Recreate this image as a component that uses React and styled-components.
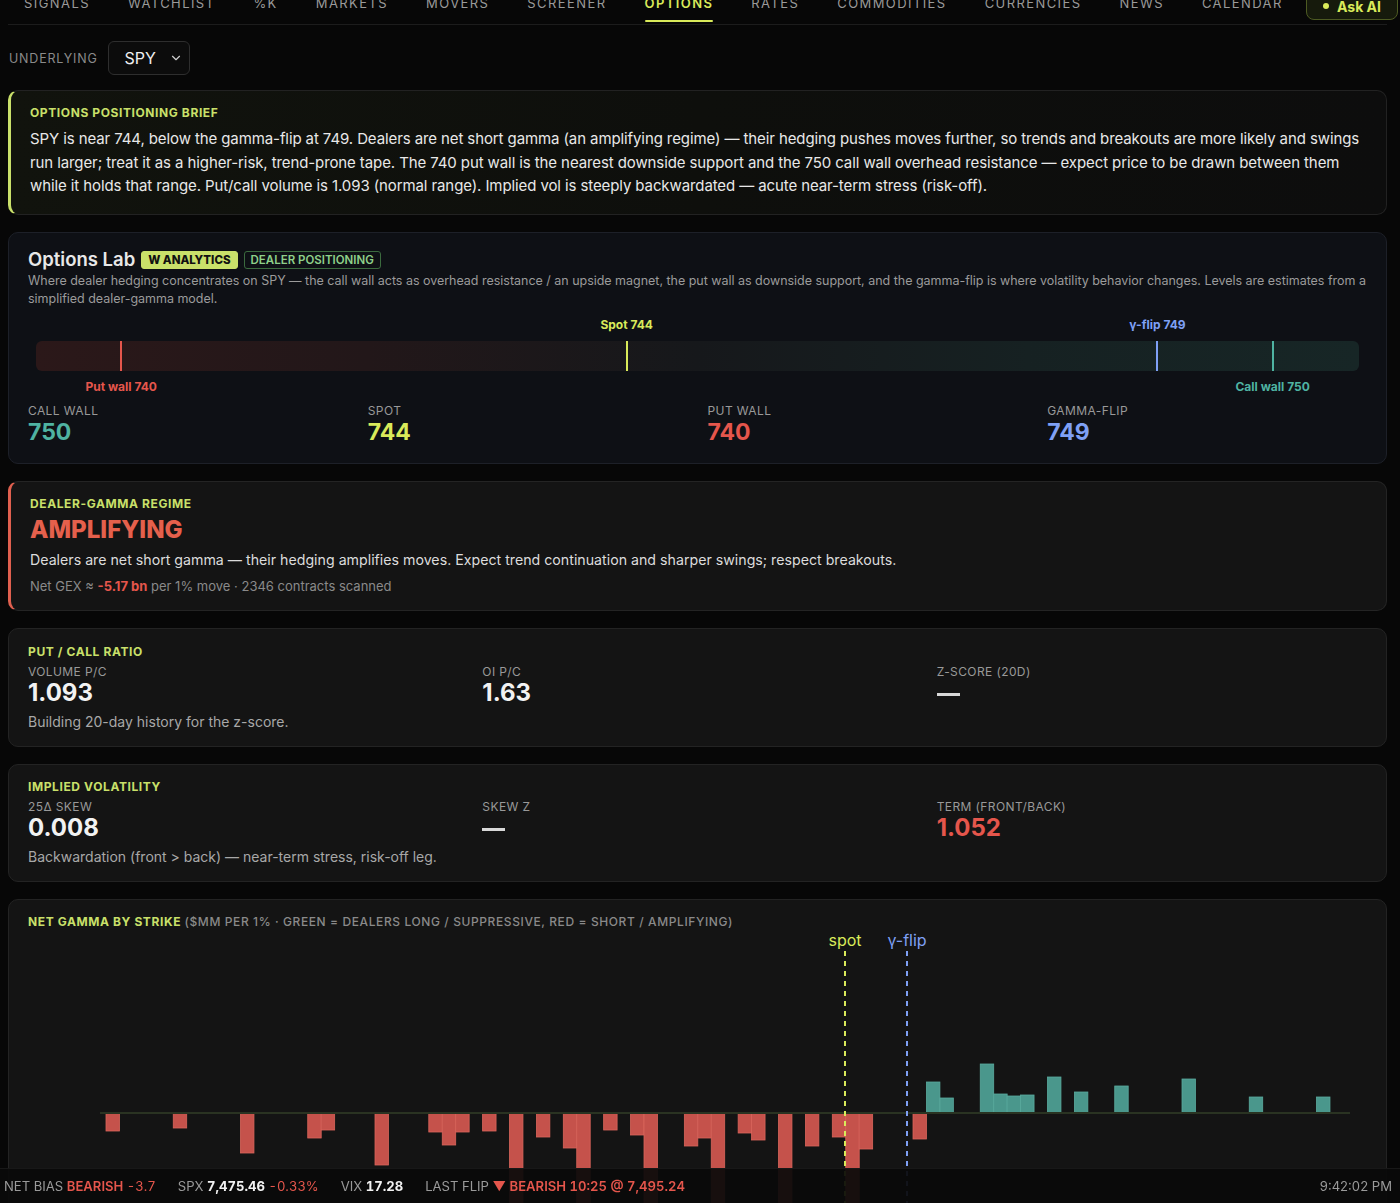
import React, { useLayoutEffect } from "react";
import styled, { createGlobalStyle } from "styled-components";
import { ChevronDown } from "lucide-react";

const Global = createGlobalStyle`
  html, body { margin: 0; padding: 0; background: #070707; scroll-behavior: auto; }
  body { font-family: Inter, "Noto Sans", "Liberation Sans", sans-serif; color: #e6e6e6; }
  * { box-sizing: border-box; }
`;

const ACCENT = "#c9e06a";
const SPOT = "#d9ea5a";
const RED = "#e5564c";
const TEAL = "#4fb3a2";
const BLUE = "#7fa0f5";

const Page = styled.div`
  padding: 0 13px 60px 8px;
`;

const Nav = styled.nav`
  display: flex;
  align-items: flex-start;
  border-bottom: 1px solid #1c1c1c;
  padding-bottom: 2px;
`;

const Tabs = styled.div`
  display: flex;
  margin-left: -3px;
`;

const Tab = styled.div`
  padding: 14px 19px 8px;
  font-size: 13px;
  line-height: 18px;
  letter-spacing: 1.42px;
  text-transform: uppercase;
  color: ${(p) => (p.$active ? SPOT : "#9a9a9a")};
  font-weight: ${(p) => (p.$active ? 600 : 400)};
  border-bottom: 2px solid transparent;
  position: relative;
  &::after {
    content: "";
    position: absolute;
    left: 19px;
    right: 19px;
    bottom: -2px;
    height: 2px;
    border-radius: 1px;
    background: ${(p) => (p.$active ? SPOT : "transparent")};
  }
`;

const AskAI = styled.button`
  margin: 12px -11px 0 auto;
  width: 92px;
  height: 28px;
  display: flex;
  align-items: center;
  justify-content: center;
  gap: 8px;
  background: #161a0c;
  border: 1px solid #4d5a22;
  border-radius: 8px;
  color: ${SPOT};
  font-family: Inter, sans-serif;
  font-weight: 700;
  font-size: 14px;
  padding: 0;
`;

const Dot = styled.span`
  width: 6px;
  height: 6px;
  border-radius: 50%;
  background: ${SPOT};
`;

const UnderlyingRow = styled.div`
  display: flex;
  align-items: center;
  gap: 10px;
  margin: 16px 0 15px 1px;
`;

const SmallLabel = styled.span`
  font-size: 12.5px;
  letter-spacing: 0.8px;
  color: #8a8a8a;
  text-transform: uppercase;
`;

const Select = styled.div`
  width: 82px;
  height: 34px;
  border: 1px solid #2e2e2e;
  border-radius: 6px;
  background: #0c0c0c;
  display: flex;
  align-items: center;
  justify-content: space-between;
  padding: 0 6px 0 16px;
  font-size: 16px;
  color: #f0f0f0;
`;

const Stack = styled.div`
  display: flex;
  flex-direction: column;
  gap: 17px;
`;

const Card = styled.section`
  border: 1px solid ${(p) => p.$border || "#222"};
  border-left: ${(p) => (p.$accent ? `3px solid ${p.$accent}` : `1px solid ${p.$border || "#222"}`)};
  border-radius: 10px;
  background: ${(p) => p.$bg || "#141414"};
  padding: ${(p) => p.$pad || "15px 19px 14px"};
`;

const Eyebrow = styled.div`
  font-size: 12px;
  line-height: 16px;
  font-weight: 700;
  letter-spacing: 0.6px;
  text-transform: uppercase;
  color: ${ACCENT};
`;

const Muted = styled.span`
  color: #8a8a8a;
  font-weight: 500;
`;

const BriefText = styled.p`
  margin: 6px 0 0;
  font-size: 15px;
  line-height: 23.5px;
  letter-spacing: -0.1px;
  color: #e8e8e8;
`;

const LabHead = styled.div`
  display: flex;
  align-items: center;
  gap: 6px;
`;

const LabTitle = styled.h2`
  margin: 0;
  font-size: 18.5px;
  line-height: 22px;
  font-weight: 600;
  color: #e8e8e8;
`;

const Badge = styled.span`
  font-size: 11.5px;
  line-height: 14px;
  letter-spacing: 0;
  padding: 1px 6px;
  border-radius: 3px;
  margin-top: 2px;
  background: ${(p) => (p.$solid ? ACCENT : "transparent")};
  color: ${(p) => (p.$solid ? "#111" : "#8ed08a")};
  border: 1px solid ${(p) => (p.$solid ? ACCENT : "#3b6a3e")};
  font-weight: ${(p) => (p.$solid ? 800 : 600)};
`;

const Desc = styled.p`
  margin: 2px 0 0;
  font-size: 12.5px;
  line-height: 18px;
  letter-spacing: -0.02px;
  color: #9b9b9b;
`;

const Range = styled.div`
  margin: 9px 8px 0;
`;

const LabelLane = styled.div`
  position: relative;
  height: 16px;
`;

const MarkLabel = styled.span`
  position: absolute;
  top: 0;
  transform: translateX(-50%);
  white-space: nowrap;
  font-size: 12px;
  line-height: 16px;
  font-weight: 700;
  color: ${(p) => p.$color};
`;

const Track = styled.div`
  position: relative;
  height: 30px;
  margin: 8px 0;
  border-radius: 6px;
  background: linear-gradient(90deg, #2b1819 0%, #221719 25%, #16181b 50%, #162122 75%, #172626 100%);
`;

const Tick = styled.span`
  position: absolute;
  top: 0;
  bottom: 0;
  width: 2px;
  margin-left: -1px;
  background: ${(p) => p.$color};
`;

const Grid = styled.div`
  display: grid;
  grid-template-columns: repeat(${(p) => p.$cols}, 1fr);
  gap: ${(p) => p.$gap}px;
  margin-top: ${(p) => p.$mt || 0}px;
`;

const Stat = styled.div`
  display: flex;
  flex-direction: column;
`;

const StatLabel = styled.div`
  font-size: 12px;
  line-height: 16px;
  height: 16px;
  letter-spacing: 0.4px;
  color: #999;
  text-transform: uppercase;
`;

const StatValue = styled.div`
  font-size: ${(p) => p.$size || 23}px;
  line-height: ${(p) => (p.$size ? p.$size + 2 : 26)}px;
  font-weight: 700;
  color: ${(p) => p.$color || "#f2f2f2"};
`;

const Dash = styled.div`
  width: 23px;
  height: 3px;
  background: #d8d8d8;
  margin: 13px 0 10px;
`;

const Big = styled.div`
  margin-top: 3px;
  font-size: 24px;
  line-height: 30px;
  font-weight: 800;
  letter-spacing: 0;
  color: #e5604c;
`;

const Body = styled.p`
  margin: ${(p) => p.$mt || 4}px 0 0;
  font-size: ${(p) => p.$size || 15}px;
  line-height: ${(p) => p.$lh || 22}px;
  color: ${(p) => p.$color || "#dcdcdc"};
`;

const Strong = styled.b`
  color: ${(p) => p.$color || "#f2f2f2"};
  font-weight: 700;
`;

const Chart = styled.svg`
  display: block;
  margin-top: 2px;
`;

const StatusBar = styled.footer`
  position: fixed;
  left: 0;
  right: 0;
  bottom: 0;
  height: 35px;
  background: rgba(10, 10, 10, 0.93);
  border-top: 1px solid #181818;
  display: flex;
  align-items: center;
  padding: 0 8px 0 4px;
  gap: 22px;
  font-size: 13.1px;
  font-variant-numeric: tabular-nums;
  color: #9a9a9a;
`;

const Group = styled.span`
  white-space: nowrap;
`;

const Red = styled.span`
  color: ${RED};
  font-weight: ${(p) => (p.$bold ? 600 : 400)};
`;

const Clock = styled.span`
  margin-left: auto;
  color: #9a9a9a;
  font-variant-numeric: normal;
`;

const TABS = ["Signals", "Watchlist", "%K", "Markets", "Movers", "Screener", "Options", "Rates", "Commodities", "Currencies", "News", "Calendar"];

const LO = 739.26;
const HI = 750.75;
const pct = (v) => `${((v - LO) / (HI - LO)) * 100}%`;

const levels = [
  { v: 740, color: RED, label: "Put wall 740", pos: "bottom" },
  { v: 744.39, color: SPOT, label: "Spot 744", pos: "top" },
  { v: 749, color: BLUE, label: "γ-flip 749", pos: "top" },
  { v: 750, color: TEAL, label: "Call wall 750", pos: "bottom" },
];

const BARS = [
  [0, -18], [5, -15], [10, -40], [15, -25], [16, -17], [20, -52], [24, -19], [25, -32], [26, -19], [28, -18],
  [30, -120], [32, -24], [34, -35], [35, -120], [37, -17], [39, -22], [40, -120], [43, -33], [44, -25], [45, -120],
  [47, -20], [48, -27], [50, -120], [52, -33], [54, -24], [55, -120], [56, -36], [60, -26],
  [61, 31], [62, 15], [65, 49], [66, 19], [67, 17], [68, 18], [70, 36], [72, 21], [75, 27], [80, 34], [85, 16], [90, 16],
];

function GammaChart() {
  const zero = 181;
  const step = 13.45;
  const x0 = 78;
  const spotX = 817;
  const flipX = 879;
  return (
    <Chart width="1339" height="330" viewBox="0 0 1339 330">
      <text x={spotX} y="14" textAnchor="middle" fill={SPOT} fontSize="16" fontFamily="Inter, sans-serif">spot</text>
      <text x={flipX} y="14" textAnchor="middle" fill={BLUE} fontSize="16" fontFamily="Inter, sans-serif">γ-flip</text>
      {BARS.map(([i, h]) => {
        const x = x0 + i * step;
        const pos = h > 0;
        return (
          <rect
            key={i}
            x={x}
            y={pos ? zero - h : zero}
            width={step}
            height={Math.abs(h)}
            fill={pos ? "#4a978c" : "#c5524b"}
            stroke={pos ? "#5aab9e" : "#d9655b"}
            strokeWidth="0.8"
          />
        );
      })}
      <line x1="72" x2="1322" y1={zero} y2={zero} stroke="#2a3322" strokeWidth="2" />
      <line x1={spotX} x2={spotX} y1="19" y2="330" stroke={SPOT} strokeWidth="2" strokeDasharray="5 5" />
      <line x1={flipX} x2={flipX} y1="19" y2="330" stroke={BLUE} strokeWidth="2" strokeDasharray="5 5" />
    </Chart>
  );
}

function Metric({ label, value, color, dash }) {
  return (
    <Stat>
      <StatLabel>{label}</StatLabel>
      {dash ? <Dash /> : <StatValue $size={24} $color={color}>{value}</StatValue>}
    </Stat>
  );
}

export default function App() {
  useLayoutEffect(() => {
    window.scrollTo(0, 20);
  }, []);

  return (
    <>
      <Global />
      <Page>
        <Nav>
          <Tabs>
            {TABS.map((t) => (
              <Tab key={t} $active={t === "Options"}>{t}</Tab>
            ))}
          </Tabs>
          <AskAI><Dot />Ask AI</AskAI>
        </Nav>

        <UnderlyingRow>
          <SmallLabel>Underlying</SmallLabel>
          <Select>
            SPY
            <ChevronDown size={14} color="#cfcfcf" strokeWidth={2} />
          </Select>
        </UnderlyingRow>

        <Stack>
          <Card $accent={ACCENT} $bg="linear-gradient(90deg, #11130d 0%, #0e0f0c 50%, #0d0d0d 100%)" $border="#222" $pad="14px 20px 16px 19px">
            <Eyebrow>Options Positioning Brief</Eyebrow>
            <BriefText>
              SPY is near 744, below the gamma-flip at 749. Dealers are net short gamma (an amplifying regime) — their hedging pushes moves further, so trends and breakouts are more likely and swings run larger; treat it as a higher-risk, trend-prone tape. The 740 put wall is the nearest downside support and the 750 call wall overhead resistance — expect price to be drawn between them while it holds that range. Put/call volume is 1.093 (normal range). Implied vol is steeply backwardated — acute near-term stress (risk-off).
            </BriefText>
          </Card>

          <Card $bg="#0e1015" $border="#1d2028" $pad="15px 19px 18px">
            <LabHead>
              <LabTitle>Options Lab</LabTitle>
              <Badge $solid>W ANALYTICS</Badge>
              <Badge>DEALER POSITIONING</Badge>
            </LabHead>
            <Desc>
              Where dealer hedging concentrates on SPY — the call wall acts as overhead resistance / an upside magnet, the put wall as downside support, and the gamma-flip is where volatility behavior changes. Levels are estimates from a simplified dealer-gamma model.
            </Desc>
            <Range>
              <LabelLane>
                {levels.filter((l) => l.pos === "top").map((l) => (
                  <MarkLabel key={l.label} $color={l.color} style={{ left: pct(l.v) }}>{l.label}</MarkLabel>
                ))}
              </LabelLane>
              <Track>
                {levels.map((l) => (
                  <Tick key={l.label} $color={l.color} style={{ left: pct(l.v) }} />
                ))}
              </Track>
              <LabelLane>
                {levels.filter((l) => l.pos === "bottom").map((l) => (
                  <MarkLabel key={l.label} $color={l.color} style={{ left: pct(l.v) }}>{l.label}</MarkLabel>
                ))}
              </LabelLane>
            </Range>
            <Grid $cols={4} $gap={20} $mt={8}>
              <Stat><StatLabel>Call wall</StatLabel><StatValue $color={TEAL}>750</StatValue></Stat>
              <Stat><StatLabel>Spot</StatLabel><StatValue $color={SPOT}>744</StatValue></Stat>
              <Stat><StatLabel>Put wall</StatLabel><StatValue $color={RED}>740</StatValue></Stat>
              <Stat><StatLabel>Gamma-flip</StatLabel><StatValue $color={BLUE}>749</StatValue></Stat>
            </Grid>
          </Card>

          <Card $accent="#e0604f" $border="#242424" $pad="14px 20px 15px 19px">
            <Eyebrow>Dealer-gamma regime</Eyebrow>
            <Big>AMPLIFYING</Big>
            <Body $size={14.2} $mt={4}>Dealers are net short gamma — their hedging amplifies moves. Expect trend continuation and sharper swings; respect breakouts.</Body>
            <Body $mt={6} $size={13} $lh={18} $color="#8a8a8a">
              Net GEX ≈ <Strong $color={RED}>-5.17 bn</Strong> per 1% move · 2346 contracts scanned
            </Body>
          </Card>

          <Card $border="#232323">
            <Eyebrow>Put / call ratio</Eyebrow>
            <Grid $cols={3} $gap={24} $mt={4}>
              <Metric label="Volume P/C" value="1.093" />
              <Metric label="OI P/C" value="1.63" />
              <Metric label="Z-score (20d)" dash />
            </Grid>
            <Body $mt={6} $size={14} $lh={20} $color="#a8a8a8">Building 20-day history for the z-score.</Body>
          </Card>

          <Card $border="#232323" $pad="14px 19px 14px">
            <Eyebrow>Implied volatility</Eyebrow>
            <Grid $cols={3} $gap={24} $mt={4}>
              <Metric label="25Δ skew" value="0.008" />
              <Metric label="Skew Z" dash />
              <Metric label="Term (front/back)" value="1.052" color={RED} />
            </Grid>
            <Body $mt={6} $size={14} $lh={20} $color="#a8a8a8">Backwardation (front &gt; back) — near-term stress, risk-off leg.</Body>
          </Card>

          <Card $border="#232323" $pad="14px 19px 14px">
            <Eyebrow>
              Net gamma by strike <Muted>($MM per 1% · green = dealers long / suppressive, red = short / amplifying)</Muted>
            </Eyebrow>
            <GammaChart />
          </Card>
        </Stack>
      </Page>

      <StatusBar>
        <Group>NET BIAS <Red $bold>BEARISH</Red> <Red>-3.7</Red></Group>
        <Group>SPX <Strong>7,475.46</Strong> <Red>-0.33%</Red></Group>
        <Group>VIX <Strong>17.28</Strong></Group>
        <Group>LAST FLIP <Red $bold>▼ BEARISH 10:25 @ 7,495.24</Red></Group>
        <Clock>9:42:02 PM</Clock>
      </StatusBar>
    </>
  );
}
